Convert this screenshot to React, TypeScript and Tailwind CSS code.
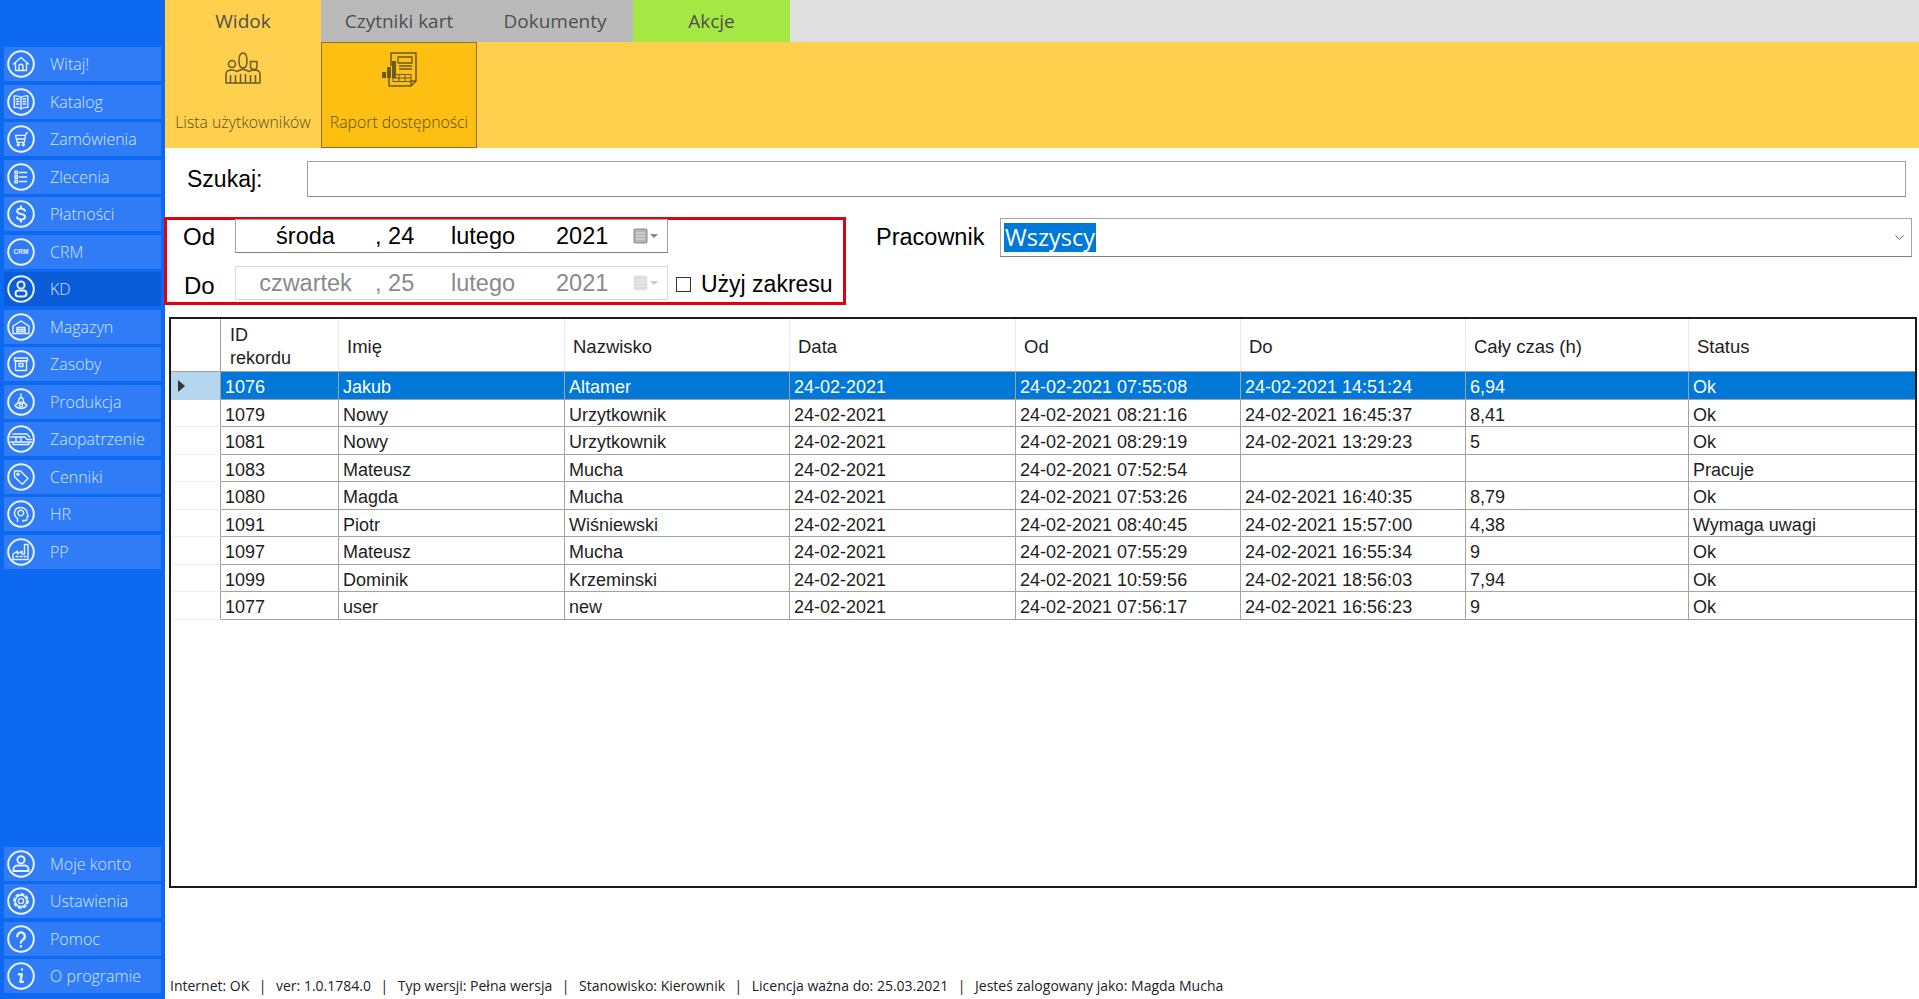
import { ChevronDown } from 'lucide-react';
import type { ReactNode } from 'react';

const Ring = ({ children }: { children: ReactNode }) => (
  <svg viewBox="0 0 28 28" className="w-[28px] h-[28px] shrink-0" fill="none" stroke="#e9f1ff" strokeWidth="1.4" strokeLinecap="round" strokeLinejoin="round">
    <circle cx="14" cy="14" r="12.8" strokeWidth="2" />
    {children}
  </svg>
);

const icons: Record<string, ReactNode> = {
  home: <path d="M6.5 14 14 7.5l7.5 6.5M8.5 12.5V20.5h11v-8M12 20.5v-4.2a2 2 0 0 1 4 0v4.2" />,
  book: <path d="M14 9.5C12 8 10 7.6 7.2 8v11.5c2.8-.4 4.8 0 6.8 1.5 2-1.5 4-1.9 6.8-1.5V8C18 7.6 16 8 14 9.5zM14 9.5V21M9.3 11h2.6M9.3 13.5h2.6M9.3 16h2.6M16.1 11h2.6M16.1 13.5h2.6M16.1 16h2.6" />,
  cart: <><path d="M20.5 8l-1.6.4-1.7 9H10.3l-1.8-7h9.5M10 14h7.8" /><circle cx="11.3" cy="19.8" r="1" /><circle cx="16.3" cy="19.8" r="1" /></>,
  list: <><path d="M12.5 9.5h7M12.5 14h7M12.5 18.5h7" strokeWidth="1.6" /><rect x="8" y="8.3" width="2.4" height="2.4" /><rect x="8" y="12.8" width="2.4" height="2.4" /><rect x="8" y="17.3" width="2.4" height="2.4" /></>,
  dollar: <path strokeWidth="2" d="M18 10.7c-.6-1.5-2.1-2.2-4-2.2-2.3 0-3.9 1.1-3.9 2.8s1.6 2.3 3.9 2.7 4 1.1 4 2.8-1.7 2.8-4 2.8c-1.9 0-3.4-.7-4-2.2M14 6.3v2.2M14 19.4v2.3" />,
  person: <><circle cx="14" cy="10" r="3.6" strokeWidth="2" /><rect x="8.5" y="15.5" width="11" height="6" rx="3" strokeWidth="2" /></>,
  warehouse: <path d="M6 20.5v-7.3L14 8l8 5.2v7.3zM10 20.5V14.5h8v6M10 16.5h8M10 18.5h8" />,
  box: <><rect x="7.5" y="8" width="13" height="3" rx=".6" /><rect x="8.5" y="11" width="11" height="9.5" rx=".6" /><rect x="12" y="13.5" width="4" height="3" /></>,
  hook: <><path d="M14 6v4M11 14.5l1.4-4.5h3.2l1.4 4.5z" /><path d="M8 17.5c1.8-2.4 3.8-3 6-3s4.2.6 6 3c-1.8 2.4-3.8 3-6 3s-4.2-.6-6-3z" /><circle cx="14" cy="17.5" r="1.6" /></>,
  truck: <><path d="M3.5 12h14.5l2 2.5h4.5M6 9h14l2.5 3M3.5 17h21M6 17v2.5h16V17" /><path d="M9 12v5M14 12v5" /></>,
  tag: <><path d="M7.5 8h6l7.5 7.5-5.7 5.7L7.5 13.7z" /><circle cx="11" cy="11.3" r="1.1" /></>,
  head: <><path d="M10.5 21.5v-3c-2.2-1.5-3.3-3.5-3-6 .4-3.2 3-5 6.3-5 3.6 0 6.4 2.5 6.4 6l1.3 2.7-1.5.5v2.3c0 1-.8 1.5-1.7 1.5H16v1" /><circle cx="13.8" cy="13" r="2.8" strokeDasharray="1.4 .8" strokeWidth="1.5" /></>,
  factory: <path d="M6 21.5v-5.5l4.5-2.8v2.8l4.5-2.8v2.8h2.5V6.5h3.5V21.5zM9 18.5h2M13 18.5h2M17 18.5h2" />,
  account: <><circle cx="14" cy="9.8" r="3.6" strokeWidth="2" /><path strokeWidth="2" d="M6.5 19.5c0-2.4 2-4 4-4h7c2 0 4 1.6 4 4v1.5h-15z" /></>,
  gear: <><circle cx="14" cy="14" r="2.6" /><circle cx="14" cy="14" r="5.7" /><circle cx="14" cy="14" r="7" strokeWidth="1.8" strokeDasharray="2.5 3" /></>,
  help: <path strokeWidth="2.4" d="M10.3 11.3a3.8 3.8 0 1 1 5.9 3.1c-1.5 1-2.3 1.6-2.3 3.1M13.9 21.3v.1" />,
  info: <path strokeWidth="2.4" d="M15 7.5v.1M11.8 12.3h3l-1.4 7.5h2.4" />,
};

const crm = (
  <text x="14" y="16.3" textAnchor="middle" fontSize="6.5" fontWeight="700" fontFamily="'Liberation Sans', sans-serif" fill="#e9f1ff" stroke="none">CRM</text>
);

const topItems = [
  { label: 'Witaj!', icon: icons.home },
  { label: 'Katalog', icon: icons.book },
  { label: 'Zamówienia', icon: icons.cart },
  { label: 'Zlecenia', icon: icons.list },
  { label: 'Płatności', icon: icons.dollar },
  { label: 'CRM', icon: crm },
  { label: 'KD', icon: icons.person, active: true },
  { label: 'Magazyn', icon: icons.warehouse },
  { label: 'Zasoby', icon: icons.box },
  { label: 'Produkcja', icon: icons.hook },
  { label: 'Zaopatrzenie', icon: icons.truck },
  { label: 'Cenniki', icon: icons.tag },
  { label: 'HR', icon: icons.head },
  { label: 'PP', icon: icons.factory },
];

const bottomItems = [
  { label: 'Moje konto', icon: icons.account },
  { label: 'Ustawienia', icon: icons.gear },
  { label: 'Pomoc', icon: icons.help },
  { label: 'O programie', icon: icons.info },
];

const rows = [
  ['1076', 'Jakub', 'Altamer', '24-02-2021', '24-02-2021 07:55:08', '24-02-2021 14:51:24', '6,94', 'Ok'],
  ['1079', 'Nowy', 'Urzytkownik', '24-02-2021', '24-02-2021 08:21:16', '24-02-2021 16:45:37', '8,41', 'Ok'],
  ['1081', 'Nowy', 'Urzytkownik', '24-02-2021', '24-02-2021 08:29:19', '24-02-2021 13:29:23', '5', 'Ok'],
  ['1083', 'Mateusz', 'Mucha', '24-02-2021', '24-02-2021 07:52:54', '', '', 'Pracuje'],
  ['1080', 'Magda', 'Mucha', '24-02-2021', '24-02-2021 07:53:26', '24-02-2021 16:40:35', '8,79', 'Ok'],
  ['1091', 'Piotr', 'Wiśniewski', '24-02-2021', '24-02-2021 08:40:45', '24-02-2021 15:57:00', '4,38', 'Wymaga uwagi'],
  ['1097', 'Mateusz', 'Mucha', '24-02-2021', '24-02-2021 07:55:29', '24-02-2021 16:55:34', '9', 'Ok'],
  ['1099', 'Dominik', 'Krzeminski', '24-02-2021', '24-02-2021 10:59:56', '24-02-2021 18:56:03', '7,94', 'Ok'],
  ['1077', 'user', 'new', '24-02-2021', '24-02-2021 07:56:17', '24-02-2021 16:56:23', '9', 'Ok'],
];

const headers = ['Imię', 'Nazwisko', 'Data', 'Od', 'Do', 'Cały czas (h)', 'Status'];

const statusParts = [
  'Internet: OK',
  'ver: 1.0.1784.0',
  'Typ wersji: Pełna wersja',
  'Stanowisko: Kierownik',
  'Licencja ważna do: 25.03.2021',
  'Jesteś zalogowany jako: Magda Mucha',
];

const SideItem = ({ label, icon, active }: { label: string; icon: ReactNode; active?: boolean }) => (
  <div className={`h-[34px] mx-[4px] flex items-center gap-[15px] pl-[3px] ${active ? 'bg-[#0a5cd9]' : 'bg-[#2f7cf6]'}`}>
    <Ring>{icon}</Ring>
    <span className="text-[16px] font-light text-[#d6e6ff] [font-family:Open_Sans,sans-serif]">{label}</span>
  </div>
);

const CalendarIcon = ({ muted }: { muted?: boolean }) => (
  <svg viewBox="0 0 27 16" className="w-[27px] h-[16px]">
    <rect x="1" y="1" width="13" height="14" rx="1" fill={muted ? '#dcdcdc' : '#b4b4b4'} stroke={muted ? '#e8e8e8' : '#8b8b8b'} />
    <path d="M3 5h9M3 8h9M3 11h9" stroke={muted ? '#f0f0f0' : '#e2e2e2'} />
    <path d="M17 6h8l-4 4z" fill={muted ? '#c8c8c8' : '#7e8894'} />
  </svg>
);

const DateBox = ({ weekday, day, muted }: { weekday: string; day: string; muted?: boolean }) => (
  <div className={`w-[433px] h-[34px] flex items-center border text-[23.5px] ${muted ? 'border-[#d9d9d9] text-[#8a8a8a]' : 'border-[#a5a5a5] border-b-[#808080] text-black'}`}>
    <span className="w-[139px] text-center">{weekday}</span>
    <span className="w-[76px]">{day}</span>
    <span className="w-[105px]">lutego</span>
    <span className="w-[77px]">2021</span>
    <CalendarIcon muted={muted} />
  </div>
);

const App = () => {
  return (
    <div className="w-[1919px] h-[999px] flex overflow-hidden bg-white [font-family:Liberation_Sans,Arial,sans-serif] text-black">
      <aside className="w-[165px] shrink-0 bg-[#0d68f2] flex flex-col justify-between pt-[47px] pb-[6px]">
        <div className="flex flex-col gap-[3.5px]">
          {topItems.map((item) => (
            <SideItem key={item.label} {...item} />
          ))}
        </div>
        <div className="flex flex-col gap-[3.5px]">
          {bottomItems.map((item) => (
            <SideItem key={item.label} {...item} />
          ))}
        </div>
      </aside>

      <main className="flex-1 min-w-0 flex flex-col">
        <div className="h-[42px] shrink-0 flex bg-[#e0e0e0] text-[19px] text-[#4f4f4f] [font-family:Open_Sans,sans-serif]">
          <div className="w-[156px] bg-[#ffd04d] flex items-center justify-center">Widok</div>
          <div className="w-[156px] bg-[#bababa] flex items-center justify-center">Czytniki kart</div>
          <div className="w-[156px] bg-[#bababa] flex items-center justify-center">Dokumenty</div>
          <div className="w-[157px] bg-[#a5e845] flex items-center justify-center">Akcje</div>
        </div>

        <div className="h-[106px] shrink-0 flex bg-[#ffd04d] text-[15.8px] font-light text-[#5f4e1c] [font-family:Open_Sans,sans-serif]">
          <div className="w-[156px] flex flex-col items-center pt-[10px]">
            <svg viewBox="0 0 36 32" className="w-[36px] h-[32px]" fill="none" stroke="#6b5a25" strokeWidth="1.5" strokeLinejoin="round">
              <path d="M14 9c0-5 1.5-8 4-8s4 3 4 8-1.8 7-4 7-4-2-4-7z" />
              <circle cx="7" cy="12" r="3.5" />
              <path d="M25.5 9.5h6.5v5c0 1.8-1.4 3-3.2 3s-3.3-1.2-3.3-3z" />
              <path d="M1 31v-9c0-2.5 2.5-4 6-4 2 0 3.5.5 4.5 1.5L18 17l6.5 2.5c1-1 2.5-1.5 4.5-1.5 3.5 0 6 1.5 6 4v9z" />
              <path d="M5.5 23v8M10.5 23v8M15.5 22v9M20.5 22v9M25.5 23v8M30.5 23v8" />
            </svg>
            <span className="mt-[27px]">Lista użytkowników</span>
          </div>
          <div className="w-[156px] border border-[#8a7432] bg-[#fdbf12] flex flex-col items-center pt-[9px]">
            <svg viewBox="0 0 38 35" className="w-[38px] h-[35px]" fill="none" stroke="#6b5a25" strokeWidth="1.5" strokeLinejoin="round">
              <path d="M11 14V1h25v28l-5 5H9V20" />
              <path d="M31 34v-5h5" />
              <path d="M18 5h14v6H18zM19 14h13M19 17h13" strokeWidth="1.3" />
              <path d="M2 20h4v6H2zM7 15h4v11H7zM12 9h4v17h-4z" fill="#6b5a25" stroke="none" />
              <path d="M13 22.5h18v7H13zM13 26h18M19 22.5v7M25 22.5v7" strokeWidth="1" />
            </svg>
            <span className="mt-[24px]">Raport dostępności</span>
          </div>
        </div>

        <div className="h-[69px] shrink-0 flex items-start pt-[13px] pl-[22px] pr-[13px] text-[23px]">
          <span className="w-[120px] leading-[36px]">Szukaj:</span>
          <div className="flex-1 h-[36px] border border-[#a0a0a0] border-b-[#8a8a8a]" />
        </div>

        <div className="h-[100px] shrink-0 flex items-start text-[23.5px] leading-[28px]">
          <div className="relative -ml-px w-[682px] h-[88px] border-[3px] border-[#e2000f]">
            <div className="flex flex-col gap-[13px] -mt-px">
              <div className="flex h-[34px]">
                <span className="w-[68px] pt-[4px] pl-[16px] text-[24px]">Od</span>
                <DateBox weekday="środa" day=", 24" />
              </div>
              <div className="flex h-[34px]">
                <span className="w-[68px] pt-[6px] pl-[17px] text-[24px]">Do</span>
                <DateBox weekday="czwartek" day=", 25" muted />
                <div className="flex items-center ml-[8px] pt-[2px] text-[23px] whitespace-nowrap">
                  <span className="w-[15px] h-[15px] border border-[#333] mr-[10px]" />
                  Użyj zakresu
                </div>
              </div>
            </div>
          </div>
          <span className="ml-[30px] pt-[6px] w-[124px] text-[23.5px] whitespace-nowrap">Pracownik</span>
          <div className="w-[912px] h-[39px] mt-[1px] pl-[3px] pr-[4px] flex items-center justify-between border border-[#a5a5a5] border-b-[#808080]">
            <span className="bg-[#0078d7] text-white h-[29px] px-[1px] text-[23.5px] leading-[28px] [font-family:Open_Sans,sans-serif]">Wszyscy</span>
            <ChevronDown className="w-[15px] h-[15px] text-[#555]" strokeWidth={1.5} />
          </div>
        </div>

        <div className="ml-[4px] mr-[2px] h-[571px] shrink-0 border-2 border-[#1c1c1c] text-[18px] leading-[22px] text-[#1e1e1e]">
          <div className="grid grid-cols-[50px_118px_226px_225px_226px_225px_225px_223px_226px] h-[53px] border-b border-[#a0a0a0] text-[18.5px]">
            <div className="border-r border-[#9c9c9c]" />
            <div className="flex items-center pl-[9px] pt-[3px] text-[18px] leading-[23px] border-r border-[#ececec]">
              <div>
                ID
                <br />
                rekordu
              </div>
            </div>
            {headers.map((h, i) => (
              <div key={h} className={`flex items-center pl-[8px] pt-[3px] ${i < 6 ? 'border-r border-[#ececec]' : ''}`}>
                {h}
              </div>
            ))}
          </div>
          {rows.map((row, r) => (
            <div key={row[0]} className="grid grid-cols-[50px_118px_226px_225px_226px_225px_225px_223px_226px] h-[27.5px]">
              <div className={`flex items-center pl-[7px] border-r border-[#9c9c9c] ${r === 0 ? 'bg-[#b6d6f0]' : 'border-b border-b-[#eeeeee]'}`}>
                {r === 0 && (
                  <svg viewBox="0 0 7 12" className="w-[7px] h-[12px]">
                    <path d="M0 0l7 6-7 6z" fill="#333" />
                  </svg>
                )}
              </div>
              {row.map((cell, c) => (
                <div
                  key={c}
                  className={`flex items-center pl-[4px] pt-[4px] border-b border-b-[#a3a3a3] ${c < 7 ? 'border-r border-r-[#a3a3a3]' : ''} ${r === 0 ? 'bg-[#0078d7] text-white' : ''}`}
                >
                  {cell}
                </div>
              ))}
            </div>
          ))}
        </div>

        <div className="mt-auto h-[23px] pl-[5px] flex items-start text-[14px] leading-[20px] text-[#222] [font-family:Open_Sans,sans-serif]">
          {statusParts.map((part, i) => (
            <span key={part} className="flex whitespace-nowrap">
              {part}
              {i < statusParts.length - 1 && <span className="mx-[9.5px]">|</span>}
            </span>
          ))}
        </div>
      </main>
    </div>
  );
};

export default App;
